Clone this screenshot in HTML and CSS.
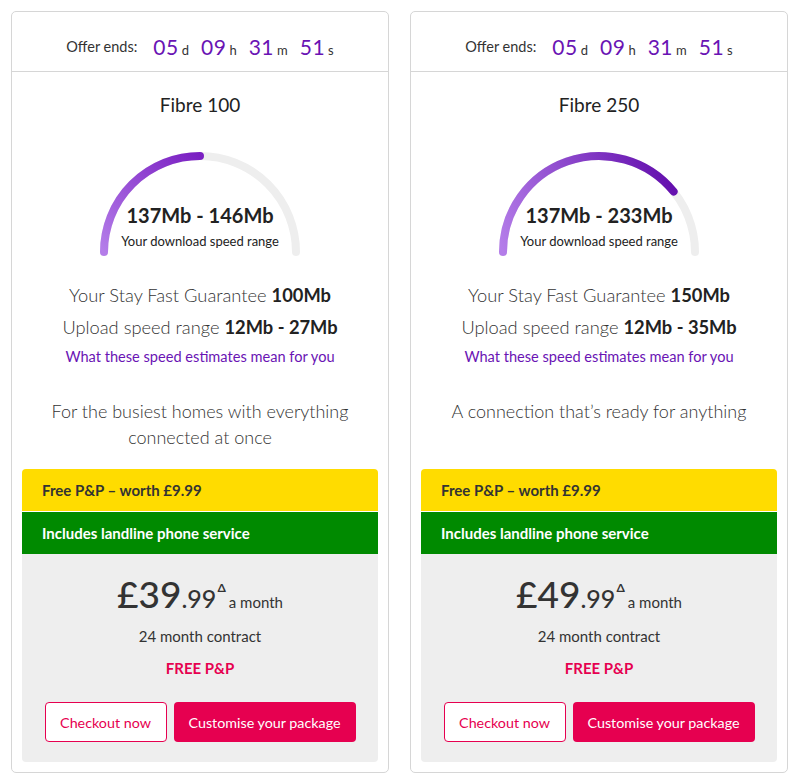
FILE: index.html
```html
<!DOCTYPE html>
<html lang="en">
<head>
<meta charset="utf-8">
<title>Broadband deals</title>
<link rel="stylesheet" href="styles.css">
</head>
<body>
<div class="cards">
  <div class="card">
    <div class="offer">
      <span class="offer-label">Offer ends:</span>
      <span class="unit"><span class="num">05</span><span class="suf">d</span></span>
      <span class="unit"><span class="num">09</span><span class="suf">h</span></span>
      <span class="unit"><span class="num">31</span><span class="suf">m</span></span>
      <span class="unit"><span class="num">51</span><span class="suf">s</span></span>
    </div>
    <h2 class="title">Fibre 100</h2>
    <div class="gauge">
      <svg class="gauge-svg" width="210" height="112" viewBox="0 0 210 112">
        <defs>
          <linearGradient id="g1" gradientUnits="userSpaceOnUse" x1="9" y1="104" x2="105" y2="8">
            <stop offset="0" stop-color="#b47de9"/>
            <stop offset="1" stop-color="#7a1fc2"/>
          </linearGradient>
        </defs>
        <path d="M 9 104 A 96 96 0 0 1 201 104" fill="none" stroke="#eeeeee" stroke-width="8" stroke-linecap="round"/>
        <path d="M 9 104 A 96 96 0 0 1 105 8" fill="none" stroke="url(#g1)" stroke-width="8" stroke-linecap="round"/>
      </svg>
      <div class="gauge-label">
        <div class="range">137Mb - 146Mb</div>
        <div class="range-sub">Your download speed range</div>
      </div>
    </div>
    <p class="spec spec-first">Your Stay Fast Guarantee <b>100Mb</b></p>
    <p class="spec">Upload speed range <b>12Mb - 27Mb</b></p>
    <a class="link" href="#">What these speed estimates mean for you</a>
    <p class="desc">For the busiest homes with everything connected at once</p>
    <div class="deal">
      <div class="band band-yellow">Free P&amp;P – worth £9.99</div>
      <div class="band band-green">Includes landline phone service</div>
      <div class="panel">
        <div class="price"><span class="pounds">£39</span><span class="pence">.99</span><sup class="delta">Δ</sup><span class="per">a month</span></div>
        <div class="contract">24 month contract</div>
        <div class="free">FREE P&amp;P</div>
        <div class="buttons">
          <a class="btn btn-outline" href="#">Checkout now</a>
          <a class="btn btn-solid" href="#">Customise your package</a>
        </div>
      </div>
    </div>
  </div>

  <div class="card">
    <div class="offer">
      <span class="offer-label">Offer ends:</span>
      <span class="unit"><span class="num">05</span><span class="suf">d</span></span>
      <span class="unit"><span class="num">09</span><span class="suf">h</span></span>
      <span class="unit"><span class="num">31</span><span class="suf">m</span></span>
      <span class="unit"><span class="num">51</span><span class="suf">s</span></span>
    </div>
    <h2 class="title">Fibre 250</h2>
    <div class="gauge">
      <svg class="gauge-svg" width="210" height="112" viewBox="0 0 210 112">
        <defs>
          <linearGradient id="g2" gradientUnits="userSpaceOnUse" x1="9" y1="104" x2="180" y2="44">
            <stop offset="0" stop-color="#b47de9"/>
            <stop offset="1" stop-color="#6410ae"/>
          </linearGradient>
        </defs>
        <path d="M 9 104 A 96 96 0 0 1 201 104" fill="none" stroke="#eeeeee" stroke-width="8" stroke-linecap="round"/>
        <path d="M 9 104 A 96 96 0 0 1 179.6 43.6" fill="none" stroke="url(#g2)" stroke-width="8" stroke-linecap="round"/>
      </svg>
      <div class="gauge-label">
        <div class="range">137Mb - 233Mb</div>
        <div class="range-sub">Your download speed range</div>
      </div>
    </div>
    <p class="spec spec-first">Your Stay Fast Guarantee <b>150Mb</b></p>
    <p class="spec">Upload speed range <b>12Mb - 35Mb</b></p>
    <a class="link" href="#">What these speed estimates mean for you</a>
    <p class="desc">A connection that’s ready for anything</p>
    <div class="deal">
      <div class="band band-yellow">Free P&amp;P – worth £9.99</div>
      <div class="band band-green">Includes landline phone service</div>
      <div class="panel">
        <div class="price"><span class="pounds">£49</span><span class="pence">.99</span><sup class="delta">Δ</sup><span class="per">a month</span></div>
        <div class="contract">24 month contract</div>
        <div class="free">FREE P&amp;P</div>
        <div class="buttons">
          <a class="btn btn-outline" href="#">Checkout now</a>
          <a class="btn btn-solid" href="#">Customise your package</a>
        </div>
      </div>
    </div>
  </div>
</div>
</body>
</html>
```

FILE: styles.css
```css
* { box-sizing: border-box; }
html, body { margin: 0; padding: 0; background: #ffffff; }
body {
  font-family: Lato, "Noto Sans", "Liberation Sans", sans-serif;
  color: #333333;
}
.cards {
  display: flex;
  gap: 21px;
  padding: 11px;
  align-items: stretch;
}
.card {
  width: 378px;
  border: 1px solid #d6d6d6;
  border-radius: 5px;
  padding: 0 10px 10px;
  display: flex;
  flex-direction: column;
  align-items: center;
  text-align: center;
}
.offer {
  align-self: stretch;
  margin: 0 -10px;
  height: 60px;
  border-bottom: 1px solid #d6d6d6;
  display: flex;
  align-items: center;
  justify-content: center;
  padding-top: 9px;
}
.offer-label {
  font-size: 14.5px;
  color: #333;
  margin-right: 16px;
}
.unit { margin-right: 12px; display: inline-flex; align-items: baseline; }
.unit:last-child { margin-right: 0; }
.num { font-size: 21px; color: #6a14b4; letter-spacing: 0.5px; }
.suf { font-size: 13px; color: #333; margin-left: 3px; }
.title {
  margin: 19px 0 0;
  font-size: 19px;
  font-weight: 400;
  line-height: 28px;
  color: #222;
}
.gauge {
  position: relative;
  margin-top: 29px;
  width: 210px;
  height: 110px;
}
.gauge-svg { display: block; }
.gauge-label {
  position: absolute;
  left: -20px;
  right: -20px;
  top: 54px;
}
.range {
  font-size: 20px;
  font-weight: 700;
  line-height: 26px;
  color: #222;
}
.range-sub {
  font-size: 13px;
  line-height: 20px;
  margin-top: 3px;
  color: #222;
}
.spec {
  margin: 0;
  font-size: 18.3px;
  font-weight: 300;
  line-height: 32px;
  color: #333;
}
.spec-first { margin-top: 21px; }
.spec b { font-weight: 700; color: #222; }
.link {
  font-size: 14.6px;
  line-height: 28px;
  color: #6a14b4;
  text-decoration: none;
}
.desc {
  margin: 27px 0 0;
  font-size: 18px;
  font-weight: 300;
  line-height: 26px;
  color: #333;
  padding: 0 20px;
  min-height: 52px;
}
.deal {
  margin-top: 19px;
  align-self: stretch;
  border-radius: 4px;
  overflow: hidden;
}
.band {
  height: 42px;
  display: flex;
  align-items: center;
  padding-left: 20px;
  font-size: 15px;
  font-weight: 700;
}
.band-yellow { background: #ffdc00; color: #333; }
.band-green { background: #008a00; color: #ffffff; margin-top: 1px; }
.panel {
  background: #eeeeee;
  padding: 18px 0 20px;
  display: flex;
  flex-direction: column;
  align-items: center;
}
.price {
  display: flex;
  align-items: baseline;
  color: #333;
  line-height: 44px;
}
.pounds { font-size: 37px; font-weight: 500; }
.pence { font-size: 25px; font-weight: 500; }
.delta { font-size: 12px; line-height: 12px; font-weight: 700; align-self: flex-start; margin-top: 10px; margin-left: 1px; }
.per { font-size: 15px; margin-left: 3px; }
.contract { font-size: 15px; line-height: 28px; margin-top: -2px; }
.free { font-size: 15px; font-weight: 700; color: #e60050; line-height: 24px; margin-top: 6px; }
.buttons {
  display: flex;
  gap: 7px;
  margin-top: 22px;
}
.btn {
  height: 40px;
  display: flex;
  align-items: center;
  justify-content: center;
  border-radius: 4px;
  font-size: 14.3px;
  text-decoration: none;
}
.btn-outline {
  width: 122px;
  border: 1px solid #e60050;
  background: #ffffff;
  color: #e60050;
}
.btn-solid {
  width: 182px;
  background: #e60050;
  color: #ffffff;
}
```
